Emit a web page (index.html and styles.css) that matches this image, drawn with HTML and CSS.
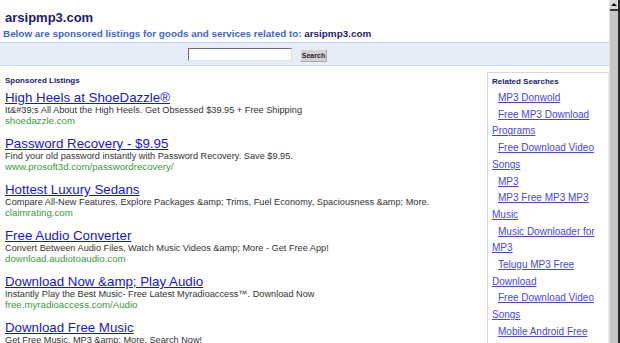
FILE: index.html
```html
<!DOCTYPE html>
<html>
<head>
<meta charset="utf-8">
<title>arsipmp3.com</title>
<link rel="stylesheet" href="styles.css">
</head>
<body>
<div class="window">
  <div class="page">
    <div class="header">
      <h1 class="site">arsipmp3.com</h1>
      <p class="sub">Below are sponsored listings for goods and services related to: <span class="sub-domain">arsipmp3.com</span></p>
    </div>
    <form class="searchbar">
      <input class="search-input" type="text">
      <button class="search-btn" type="button">Search</button>
    </form>
    <div class="content">
      <div class="listings">
        <h2 class="section-title">Sponsored Listings</h2>
        <div class="ad">
          <a class="ad-title" href="#">High Heels at ShoeDazzle®</a>
          <div class="ad-desc">It&amp;#39;s All About the High Heels. Get Obsessed $39.95 + Free Shipping</div>
          <div class="ad-url">shoedazzle.com</div>
        </div>
        <div class="ad">
          <a class="ad-title" href="#">Password Recovery - $9.95</a>
          <div class="ad-desc">Find your old password instantly with Password Recovery. Save $9.95.</div>
          <div class="ad-url">www.prosoft3d.com/passwordrecovery/</div>
        </div>
        <div class="ad">
          <a class="ad-title" href="#">Hottest Luxury Sedans</a>
          <div class="ad-desc">Compare All-New Features, Explore Packages &amp;amp; Trims, Fuel Economy, Spaciousness &amp;amp; More.</div>
          <div class="ad-url">claimrating.com</div>
        </div>
        <div class="ad">
          <a class="ad-title" href="#">Free Audio Converter</a>
          <div class="ad-desc">Convert Between Audio Files, Watch Music Videos &amp;amp; More - Get Free App!</div>
          <div class="ad-url">download.audiotoaudio.com</div>
        </div>
        <div class="ad">
          <a class="ad-title" href="#">Download Now &amp;amp; Play Audio</a>
          <div class="ad-desc">Instantly Play the Best Music- Free Latest Myradioaccess™. Download Now</div>
          <div class="ad-url">free.myradioaccess.com/Audio</div>
        </div>
        <div class="ad">
          <a class="ad-title" href="#">Download Free Music</a>
          <div class="ad-desc">Get Free Music, MP3 &amp;amp; More. Search Now!</div>
          <div class="ad-url">www.musicdownload.com</div>
        </div>
      </div>
      <div class="related">
        <h2 class="section-title">Related Searches</h2>
        <ul class="related-list">
          <li><a href="#">MP3 Donwold</a></li>
          <li><a href="#">Free MP3 Download Programs</a></li>
          <li><a href="#">Free Download Video Songs</a></li>
          <li><a href="#">MP3</a></li>
          <li><a href="#">MP3 Free MP3 MP3 Music</a></li>
          <li><a href="#">Music Downloader for MP3</a></li>
          <li><a href="#">Telugu MP3 Free Download</a></li>
          <li><a href="#">Free Download Video Songs</a></li>
          <li><a href="#">Mobile Android Free Games</a></li>
        </ul>
      </div>
    </div>
  </div>
  <div class="scrollbar">
    <div class="sb-btn"><span class="sb-arrow"></span></div>
    <div class="sb-track"></div>
  </div>
</div>
</body>
</html>
```
FILE: styles.css
```css
html, body {
  margin: 0;
  padding: 0;
  background: #fff;
  overflow: hidden;
}
body {
  font-family: "Liberation Sans", Arial, sans-serif;
}
.window {
  display: flex;
  width: 620px;
  height: 343px;
}
.page {
  flex: 1;
  min-width: 0;
  overflow: hidden;
}
.header {
  padding: 10px 5px 0 5px;
}
.site {
  margin: 0;
  font-size: 13px;
  line-height: 16px;
  font-weight: bold;
  color: #1b1a6b;
}
.sub {
  margin: 2px 0 2px -2px;
  font-size: 9.9px;
  line-height: 12px;
  font-weight: bold;
  color: #3f63d6;
  white-space: nowrap;
}
.sub-domain {
  color: #1b1a6b;
}
.searchbar {
  margin: 0;
  display: flex;
  align-items: flex-start;
  padding: 5px 0 0 188px;
  background: #e6edf9;
  border-top: 1px solid #c7d5ef;
  border-bottom: 1px solid #c7d5ef;
  box-sizing: border-box;
  height: 24px;
}
.search-input {
  width: 104px;
  height: 13px;
  box-sizing: border-box;
  margin: 0;
  padding: 0;
  background: #fff;
  border: 1px solid;
  border-color: #6e6e6e #e0e0e0 #e0e0e0 #6e6e6e;
}
.search-btn {
  margin: 1px 0 0 8px;
  width: 27px;
  height: 13px;
  padding: 0;
  box-sizing: border-box;
  background: #d2d2d2;
  border: 1px solid;
  border-color: #ececec #a8a8a8 #a8a8a8 #ececec;
  font-family: "Liberation Sans", Arial, sans-serif;
  font-size: 7px;
  font-weight: bold;
  color: #222;
  line-height: 11px;
}
.content {
  display: flex;
  align-items: flex-start;
}
.listings {
  flex: 1;
  padding: 10px 0 0 5px;
  min-width: 0;
}
.section-title {
  margin: 0;
  font-size: 8px;
  line-height: 10px;
  font-weight: bold;
  color: #1b1a6b;
}
.listings .section-title {
  margin-bottom: 4px;
}
.ad {
  margin-bottom: 10px;
  white-space: nowrap;
}
.ad-title {
  display: block;
  font-size: 13.3px;
  line-height: 15px;
  color: #1515dd;
  text-decoration: underline;
}
.ad-desc {
  font-size: 9.2px;
  line-height: 11px;
  color: #333;
}
.ad-url {
  font-size: 9.7px;
  line-height: 10px;
  color: #3a9a3a;
}
.related {
  width: 122px;
  box-sizing: border-box;
  margin-top: 6px;
  padding: 4px 6px 40px 4px;
  border: 1px solid #cfd8e8;
  border-right-color: #e0e6f0;
}
.related .section-title {
  margin-bottom: 3px;
}
.related-list {
  list-style: none;
  margin: 0;
  padding: 0;
}
.related-list li {
  font-size: 10px;
  line-height: 16.7px;
  text-indent: 6px;
}
.related-list a {
  color: #4646e6;
  text-decoration: underline;
}
.scrollbar {
  width: 11px;
  display: flex;
  flex-direction: column;
  box-sizing: border-box;
  border-left: 1px solid #e4e4e4;
  border-right: 2px solid #2a2a2a;
  background: #c6c6c6;
}
.sb-btn {
  height: 9px;
  background: #d9d9d9;
  border-bottom: 2px solid #3a3a3a;
  display: flex;
  align-items: center;
  justify-content: center;
}
.sb-arrow {
  width: 0;
  height: 0;
  border-left: 3px solid transparent;
  border-right: 3px solid transparent;
  border-bottom: 3px solid #111;
}
.sb-track {
  flex: 1;
  background: #c6c6c6;
}
```
